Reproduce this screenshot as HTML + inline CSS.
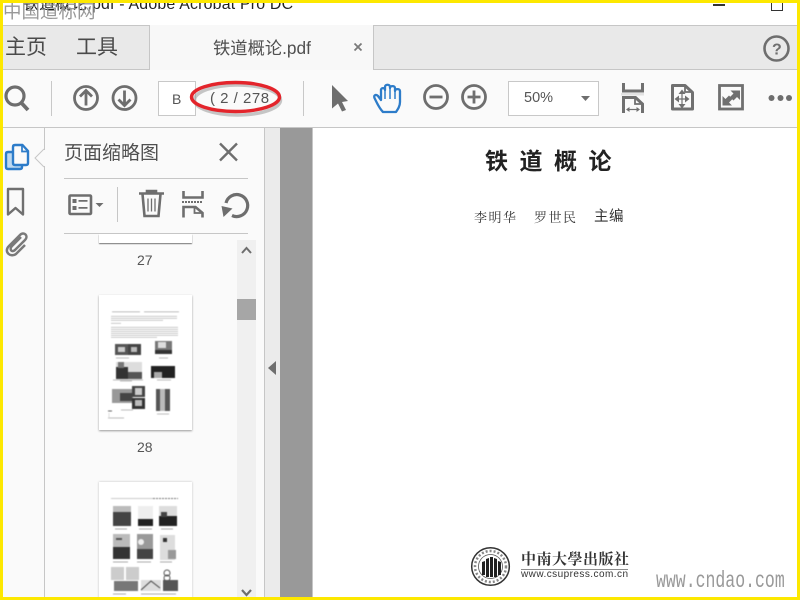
<!DOCTYPE html>
<html lang="zh"><head><meta charset="utf-8"><style>
html,body{margin:0;padding:0;width:800px;height:600px;overflow:hidden;background:#fff}
body{position:relative;font-family:"Liberation Sans","Noto Sans CJK SC",sans-serif;color:#4b4b4b}
.a{position:absolute}
.t{position:absolute;white-space:nowrap;line-height:1}
svg{position:absolute;left:0;top:0}
</style></head><body>
<div class="a" style="left:0;top:26px;width:800px;height:44px;background:#e9e9e9"></div>
<div class="a" style="left:0;top:25px;width:800px;height:1px;background:#c6c6c6"></div>
<div class="a" style="left:149px;top:25px;width:225px;height:45px;background:#f8f8f8;border-left:1px solid #c6c6c6;border-right:1px solid #c6c6c6;box-sizing:border-box;border-bottom:0"></div>
<div class="a" style="left:0;top:69px;width:149px;height:1px;background:#c6c6c6"></div>
<div class="a" style="left:374px;top:69px;width:426px;height:1px;background:#c6c6c6"></div>
<div class="a" style="left:0;top:70px;width:800px;height:57px;background:#fafafa"></div>
<div class="a" style="left:0;top:127px;width:800px;height:1px;background:#c6c6c6"></div>
<div class="a" style="left:0;top:128px;width:44px;height:472px;background:#fafafa"></div>
<div class="a" style="left:44px;top:128px;width:1px;height:472px;background:#c6c6c6"></div>
<div class="a" style="left:45px;top:128px;width:219px;height:472px;background:#fafafa"></div>
<div class="a" style="left:264px;top:128px;width:1px;height:472px;background:#c6c6c6"></div>
<div class="a" style="left:265px;top:128px;width:15px;height:472px;background:#ebebeb"></div>
<div class="a" style="left:280px;top:128px;width:32px;height:472px;background:#999"></div>
<div class="a" style="left:312px;top:128px;width:1px;height:472px;background:#c6c6c6"></div>
<div class="a" style="left:313px;top:128px;width:487px;height:472px;background:#fff"></div>

<div class="t" style="left:23px;top:-3px;font-size:15.900px;color:#222;letter-spacing:.2px">铁道概论.pdf - Adobe Acrobat Pro DC</div>
<div class="t" style="left:3px;top:3px;font-size:18.500px;color:#8e8e8e;opacity:.9">中国道标网</div>
<div class="a" style="left:713px;top:4px;width:12px;height:2px;background:#333"></div>
<div class="a" style="left:771px;top:0;width:10px;height:10px;border:1px solid #333;border-top:0"></div>

<div class="t" style="left:5px;top:37px;font-size:21px;color:#4a4a4a">主页</div>
<div class="t" style="left:76px;top:37px;font-size:21px;color:#4a4a4a">工具</div>
<div class="t" style="left:213px;top:40px;font-size:17.300px;color:#505050">铁道概论.pdf</div>

<div class="a" style="left:158px;top:81px;width:38px;height:35px;box-sizing:border-box;background:#fff;border:1px solid #c8c8c8"></div>
<div class="t" style="left:172px;top:92px;font-size:14px;color:#555">B</div>
<div class="t" style="left:210px;top:91px;font-size:15px;color:#555;letter-spacing:.5px">( 2 / 278</div>
<div class="a" style="left:508px;top:81px;width:91px;height:35px;box-sizing:border-box;background:#fff;border:1px solid #c8c8c8"></div>
<div class="t" style="left:524px;top:91px;font-size:14.500px;color:#555">50%</div>

<div class="t" style="left:64px;top:144px;font-size:19px;color:#505050">页面缩略图</div>
<div class="a" style="left:64px;top:178px;width:184px;height:1px;background:#c6c6c6"></div>
<div class="a" style="left:64px;top:233px;width:184px;height:1px;background:#c6c6c6"></div>
<div class="a" style="left:117px;top:187px;width:1px;height:35px;background:#c6c6c6"></div>

<div class="a" style="left:237px;top:240px;width:19px;height:360px;background:#f0f0f0"></div>
<div class="a" style="left:237px;top:299px;width:19px;height:21px;background:#a6a6a6"></div>

<div class="a" style="left:99px;top:234px;width:93px;height:9px;background:#fff;box-shadow:0 1px 1px #777"></div>
<div class="t" style="left:137px;top:253px;font-size:14px;color:#555">27</div>
<div class="t" style="left:137px;top:440px;font-size:14px;color:#555">28</div>
<div class="a" style="left:99px;top:295px;width:93px;height:135px;background:#fff;box-shadow:0 1px 2px #999"></div>
<div class="a" style="left:99px;top:482px;width:93px;height:118px;background:#fff;box-shadow:0 0 2px #bbb"></div>

<svg width="800" height="600" viewBox="0 0 800 600" fill="none">
<!-- tab close -->
<path d="M354.500 43.500l7 7M361.500 43.500l-7 7" stroke="#7a7a7a" stroke-width="1.800"/>
<!-- toolbar separators -->
<path d="M51.500 81v35M303.500 81v35" stroke="#c8c8c8"/>
<!-- search -->
<g stroke="#6e6e6e" stroke-width="3.200"><circle cx="15" cy="96" r="9"/><path d="M21.500 103l6.500 7" stroke-width="3.800"/></g>
<!-- up/down -->
<g stroke="#6e6e6e" stroke-width="2.800">
<circle cx="86" cy="98" r="11.500"/><path d="M86 105.500V91M80 96.500l6-6 6 6"/>
<circle cx="124.500" cy="98" r="11.500"/><path d="M124.500 90.500v14.500M118.500 99.500l6 6 6-6"/>
</g>
<!-- arrow cursor -->
<path d="M332 85L348 101L342 102L346 110L342 111.500L338 103.500L332 108.500z" fill="#6e6e6e"/>
<!-- hand -->
<path d="M383 112C379 108 377 103 374.500 98C373.500 95 376 94 378 96L381 100V90C381 87.500 385 87.500 385 90V87C385 84 390 84 390 87V88C390 85.500 395 85.500 395 88V91C395 88.500 400 88.500 400 91V102C400 106 398 109 396 112Z" stroke="#2d7cc9" stroke-width="2.300" stroke-linejoin="round"/>
<path d="M385 89v10M390 87v12M395 89v10" stroke="#2d7cc9" stroke-width="1.500"/>
<!-- zoom -->
<g stroke="#6e6e6e" stroke-width="2.800">
<circle cx="436" cy="97" r="11.500"/><path d="M429.500 97h13"/>
<circle cx="474" cy="97" r="11.500"/><path d="M467.500 97h13M474 90.500v13"/>
</g>
<path d="M581 96h9l-4.500 5z" fill="#6e6e6e"/>
<!-- fit width -->
<g stroke="#707070" stroke-width="3">
<path d="M623.500 83v8h19v-8"/>
<path d="M623.500 113V97.500h12l7 6.500V113"/>
<path d="M635 97v7h7" stroke-width="1.800"/>
<path d="M627 109.500h12" stroke-width="1.200"/>
</g>
<path d="M621 93h23v2.500h-23z" fill="#e2e2e2"/>
<path d="M626 109.500l3.500-2.500v5zM640 109.500l-3.500-2.500v5z" fill="#707070"/>
<!-- page w/ arrows -->
<g stroke="#707070" stroke-width="3">
<path d="M672.500 85.500h12.500l7.500 7V109h-20z" stroke-linejoin="round"/>
<path d="M685 86v6h7" stroke-width="1.800"/>
<path d="M682 93v12M676 99h12" stroke-width="1.200"/>
</g>
<path d="M682 89.500l3.500 4.500h-7zM682 108.500l3.500-4.500h-7zM674.500 99l4.500-3.500v7zM689.500 99l-4.500-3.500v7z" fill="#707070"/>
<!-- fullscreen -->
<rect x="719.500" y="85.500" width="23" height="23.500" stroke="#707070" stroke-width="2.800"/>
<path d="M730.500 90.500h9.500v9.500l-3-3-3.500 3.500-3.500-3.500 3.500-3.500zM732 105.500h-9.500v-9.500l3 3 3.500-3.500 3.500 3.500-3.500 3.500z" fill="#707070"/>
<!-- more -->
<circle cx="771.500" cy="98" r="3" fill="#6e6e6e"/><circle cx="780.500" cy="98" r="3" fill="#6e6e6e"/><circle cx="789" cy="98" r="3" fill="#6e6e6e"/>
<!-- help -->
<circle cx="776.500" cy="48.500" r="12" stroke="#6e6e6e" stroke-width="2.600"/>
<text x="772" y="54.500" font-family="Liberation Sans" font-weight="700" font-size="16" fill="#6e6e6e">?</text>

<!-- red oval -->
<ellipse cx="237.500" cy="100" rx="43" ry="15" stroke="#999" stroke-width="3.500" opacity=".55"/>
<ellipse cx="235.500" cy="97" rx="44" ry="14.500" stroke="#e3242b" stroke-width="3.400"/>

<!-- rail icons -->
<path d="M7 153h6v12h8v3H7z" fill="#bcd8f0"/>
<path d="M12.500 152H8q-2 0-2 2v13q0 2 2 2h12q2 0 2-2v-2" stroke="#2d7cc9" stroke-width="2.400"/>
<path d="M13 163V147q0-2 2-2h7.500l5.500 6v12q0 2-2 2H15q-2 0-2-2z" stroke="#2d7cc9" stroke-width="2.400" stroke-linejoin="round"/>
<path d="M22 145v6.500h6" stroke="#2d7cc9" stroke-width="1.700"/>
<path d="M8 189h15v25.500l-7.500-6.500-7.500 6.500z" stroke="#707070" stroke-width="2.400" stroke-linejoin="round"/>
<path d="M21 240l-9 9c-3 3-.5 7 3 4l10-10c4-4-1-9-5-5l-11 11c-6 6 2 12 7 8l9-9" stroke="#7a7a7a" stroke-width="2.500" transform="translate(0 -3)"/>
<!-- panel notch -->
<path d="M44 149l-9 9 9 9" fill="#fafafa" stroke="#c6c6c6"/><path d="M44.500 150v16" stroke="#fafafa" stroke-width="1.500"/>
<!-- close -->
<path d="M220 143.500l17 17M237 143.500l-17 17" stroke="#6e6e6e" stroke-width="2.400"/>
<!-- panel tools -->
<rect x="69.500" y="195.500" width="21.500" height="18.500" rx="1" stroke="#6e6e6e" stroke-width="2.600"/>
<path d="M72.500 199h4v4h-4zM72.500 206h4v4h-4zM78.500 200h9v1.800h-9zM78.500 207h9v1.800h-9z" fill="#6e6e6e"/>
<path d="M95.500 203h8l-4 4z" fill="#6e6e6e"/>
<g stroke="#6e6e6e" stroke-width="2.600">
<path d="M139 193.500h25M147 193v-2h9v2M142.500 194l2 22h14l2-22"/>
<path d="M148 198.500v13M151.500 198.500v13M155 198.500v13" stroke-width="1.300"/>
<path d="M183.500 191v6.500h19V191"/>
<path d="M183.500 217.500v-10.500h12l7 6v4.500"/>
<path d="M194.500 207v6h8" stroke-width="1.800"/>
</g>
<path d="M182 202h21" stroke="#6e6e6e" stroke-width="2" stroke-dasharray="2 1"/>
<path d="M226 203A11 11 0 1 1 232 215.500" stroke="#6e6e6e" stroke-width="3.200"/>
<path d="M221.500 206l11 2.500-9 8.500z" fill="#6e6e6e"/>
<!-- scroll arrows -->
<path d="M242 253l4.500-5 4.500 5" stroke="#6e6e6e" stroke-width="2"/>
<path d="M242 590l4.500 5 4.500-5" stroke="#6e6e6e" stroke-width="2.200"/>
<path d="M276 361v14l-8-7z" fill="#6e6e6e"/>

<!-- thumb 28 -->
<g style="filter:blur(.4px)">
<path d="M112 311.500h27v.6h-27zM133 311.500h7v.6h-7zM144 311.500h35v.6h-35z" fill="#999"/>
<path d="M111 316h66v.6h-66zM111 318h66v.6h-66zM111 320h52v.6h-52zM111 323h10v.6h-10zM111 327h67v.6h-67zM111 329h67v.6h-67zM111 331h67v.6h-67zM111 333h67v.6h-67zM111 335h67v.6h-67zM111 337h46v.6h-46z" fill="#aaa"/>
<rect x="115" y="344" width="13" height="11" fill="#555"/><rect x="128" y="344" width="13" height="11" fill="#444"/>
<rect x="118" y="347" width="7" height="5" fill="#ccc"/><rect x="131" y="347" width="6" height="5" fill="#bbb"/>
<rect x="155" y="341" width="17" height="13" fill="#777"/><rect x="158" y="342" width="8" height="6" fill="#ddd"/><rect x="155" y="350" width="17" height="4" fill="#333"/>
<rect x="116" y="362" width="26" height="17" fill="#ddd"/><rect x="116" y="367" width="12" height="12" fill="#333"/><rect x="128" y="372" width="14" height="7" fill="#555"/><rect x="118" y="362" width="6" height="6" fill="#777"/>
<rect x="151" y="366" width="24" height="12" fill="#222"/><rect x="154" y="372" width="8" height="6" fill="#aaa"/>
<rect x="112" y="389" width="21" height="14" fill="#999"/><rect x="120" y="393" width="12" height="8" fill="#444"/>
<rect x="132" y="386" width="13" height="11" fill="#444"/><rect x="135" y="388" width="7" height="7" fill="#ccc"/>
<rect x="132" y="398" width="13" height="11" fill="#333"/><rect x="135" y="400" width="7" height="6" fill="#bbb"/>
<rect x="156" y="389" width="14" height="22" fill="#555"/><rect x="160" y="389" width="5" height="22" fill="#bbb"/>
<path d="M116 358h13M120 381h12M113 380h30M157 380h14M159 358h9M121 410h12M157 414h12M108 418h16" stroke="#bbb"/>
<path d="M108 411h4" stroke="#666"/><path d="M109 413v5" stroke="#ddd"/>
</g>
<!-- thumb 29 -->
<g style="filter:blur(.4px)">
<path d="M111 498.500h42" stroke="#999" stroke-width=".6"/><path d="M153 498.500h25" stroke="#777" stroke-dasharray="2 1"/>
<rect x="113" y="506" width="18" height="20" fill="#bbb"/><rect x="113" y="512" width="18" height="14" fill="#444"/>
<rect x="138" y="506" width="15" height="20" fill="#eee"/><rect x="138" y="519" width="15" height="7" fill="#222"/>
<rect x="159" y="506" width="18" height="20" fill="#ddd"/><rect x="159" y="516" width="18" height="10" fill="#222"/><rect x="161" y="512" width="6" height="5" fill="#444"/>
<rect x="113" y="534" width="17" height="25" fill="#bbb"/><rect x="113" y="547" width="17" height="12" fill="#333"/><rect x="116" y="538" width="6" height="2" fill="#555"/>
<rect x="137" y="534" width="16" height="25" fill="#999"/><rect x="137" y="549" width="16" height="10" fill="#444"/><circle cx="141" cy="542" r="3" fill="#eee"/>
<rect x="160" y="535" width="15" height="25" fill="#ddd"/><rect x="163" y="538" width="4" height="4" fill="#333"/><rect x="168" y="550" width="8" height="9" fill="#999"/>
<rect x="111" y="567" width="13" height="13" fill="#ccc"/><rect x="126" y="567" width="13" height="13" fill="#ccc"/>
<rect x="114" y="581" width="24" height="10" fill="#777"/>
<rect x="141" y="580" width="20" height="11" fill="#ddd"/><path d="M141 590l10-9 9 7" stroke="#444"/>
<rect x="163" y="580" width="15" height="11" fill="#555"/><circle cx="167" cy="573" r="3" stroke="#555"/><circle cx="167" cy="578" r="3" stroke="#555"/>
<path d="M115 529h12M139 529h13M161 529h12M113 562h15M137 562h14M160 562h12M113 594h13M141 594h35" stroke="#aaa"/>
</g>

<!-- logo -->
<circle cx="490.500" cy="566.500" r="18.800" stroke="#333" stroke-width="1.500"/>
<circle cx="490.500" cy="566.500" r="12" stroke="#555" stroke-width=".8"/>
<circle cx="490.500" cy="566.500" r="15.500" stroke="#888" stroke-width="2.500" stroke-dasharray="2 2"/>
<path d="M482 562l3-1v14h-3zM486 559l3-1v19h-3zM490 557h3v20h-3zM494 558l3 1v18h-3zM498 561l3 1v13h-3z" fill="#222"/>
<path d="M521 569.500h107" stroke="#666" stroke-width=".8"/>
</svg>

<div class="t" style="left:485px;top:150px;font-size:23px;font-weight:700;color:#222;letter-spacing:11.500px">铁道概论</div>
<div class="t" style="left:474px;top:211px;font-size:13px;color:#333;letter-spacing:1.500px;font-family:'Liberation Serif','Noto Serif CJK SC',serif">李明华</div>
<div class="t" style="left:534px;top:211px;font-size:13px;color:#333;letter-spacing:1.500px;font-family:'Liberation Serif','Noto Serif CJK SC',serif">罗世民</div>
<div class="t" style="left:594px;top:210px;font-size:14.500px;color:#333;letter-spacing:.5px">主编</div>
<div class="t" style="left:521px;top:553px;font-size:15px;font-weight:700;color:#333;letter-spacing:.5px;font-family:'Liberation Serif','Noto Serif CJK SC',serif">中南大學出版社</div>
<div class="t" style="left:521px;top:570px;font-size:10px;color:#333;letter-spacing:.45px">www.csupress.com.cn</div>
<div class="t" style="left:656px;top:570px;font-size:16.500px;color:#999;font-family:'Liberation Mono',monospace;transform:scaleY(1.4);transform-origin:top left">www.cndao.com</div>

<div class="a" style="left:0;top:0;width:800px;height:3px;background:#fde800"></div>
<div class="a" style="left:0;top:597px;width:800px;height:3px;background:#fde800"></div>
<div class="a" style="left:0;top:0;width:3px;height:600px;background:#fde800"></div>
<div class="a" style="left:797px;top:0;width:3px;height:600px;background:#fde800"></div>
</body></html>
